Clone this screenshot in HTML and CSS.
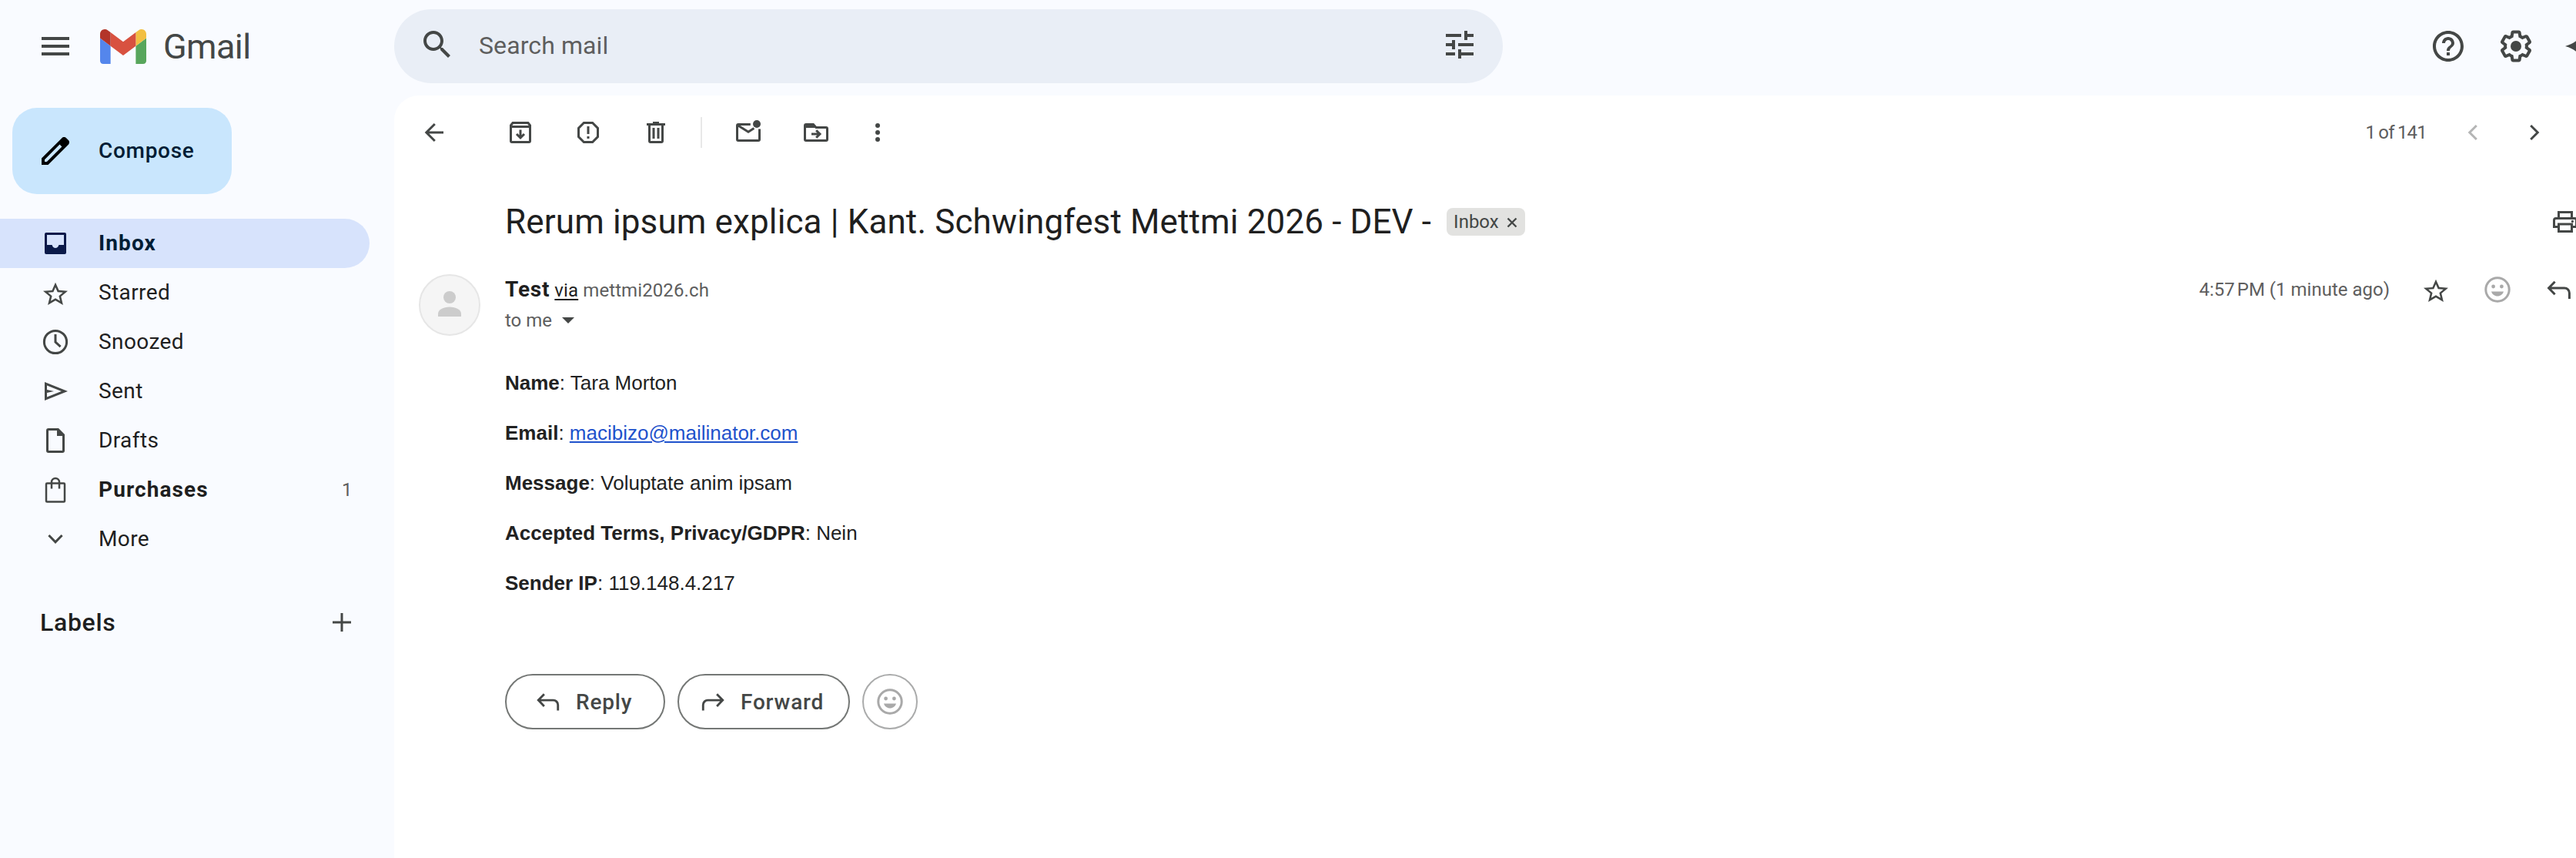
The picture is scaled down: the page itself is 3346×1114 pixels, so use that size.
FILE: index.html
```html
<!DOCTYPE html>
<html lang="en">
<head>
    <meta charset="UTF-8">
    <meta name="viewport" content="width=device-width, initial-scale=1.0">
    <title>Gmail</title>
    <link rel="stylesheet" href="styles.css">
</head>
<body>
    <svg class="sprite" width="0" height="0">
        <symbol id="star" viewBox="0 0 20 20"><path transform="translate(.4 1.8) scale(.8 .77)" d="M22 9.24l-7.19-.62L12 2 9.19 8.63 2 9.24l5.46 4.73L5.82 21 12 17.27 18.18 21l-1.63-7.03L22 9.24zM12 15.4l-3.76 2.27 1-4.28-3.32-2.88 4.38-.38L12 6.1l1.71 4.04 4.38.38-3.32 2.88 1 4.28L12 15.4z"/></symbol>
        <symbol id="smile" viewBox="0 0 20 20"><circle class="line" cx="10" cy="10" r="7.6"/><circle cx="7.3" cy="8" r="1.2"/><circle cx="12.7" cy="8" r="1.2"/><path d="M6 11.3h8c-.5 1.8-2.1 3-4 3s-3.5-1.2-4-3z"/></symbol>
        <symbol id="reply" viewBox="0 0 20 20"><path class="line" d="M7.3 4.9 3.3 9l4 4.1M3.6 9h9.9a3.2 3.2 0 0 1 3.2 3.2V16"/></symbol>
    </svg>

    <header class="header">
        <div class="brand">
            <svg class="icon-lg" viewBox="0 0 24 24"><path d="M3 18h18v-2H3v2zm0-5h18v-2H3v2zm0-7v2h18V6H3z"/></svg>
            <svg class="logo" viewBox="52 42 88 66">
                <path fill="#5486ec" d="M58 108h14V74L52 59v43c0 3.32 2.69 6 6 6"/>
                <path fill="#58a65c" d="M120 108h14c3.32 0 6-2.69 6-6V59l-20 15"/>
                <path fill="#f2bf42" d="M120 48v26l20-15v-8c0-7.42-8.47-11.65-14.4-7.2"/>
                <path fill="#d85140" d="M72 74V48l24 18 24-18v26L96 92"/>
                <path fill="#b33429" d="M52 51v8l20 15V48l-5.6-4.2c-5.94-4.45-14.4-.22-14.4 7.2"/>
            </svg>
            <span class="brand-name">Gmail</span>
        </div>
        <div class="search">
            <svg class="icon-lg" viewBox="0 0 24 24"><path d="M15.5 14h-.79l-.28-.27C15.41 12.59 16 11.11 16 9.5 16 5.91 13.09 3 9.5 3S3 5.91 3 9.5 5.91 16 9.5 16c1.61 0 3.09-.59 4.23-1.57l.27.28v.79l5 4.99L20.49 19l-4.99-5zm-6 0C7.01 14 5 11.99 5 9.5S7.01 5 9.5 5 14 7.01 14 9.5 11.99 14 9.5 14z"/></svg>
            <span class="search-text">Search mail</span>
            <svg class="icon-lg" viewBox="0 0 24 24"><path d="M3 17v2h6v-2H3zM3 5v2h10V5H3zm10 16v-2h8v-2h-8v-2h-2v6h2zM7 9v2H3v2h4v2h2V9H7zm14 4v-2H11v2h10zm-6-4h2V7h4V5h-4V3h-2v6z"/></svg>
        </div>
        <div class="header-tools">
            <svg class="icon-lg" viewBox="0 0 24 24"><path d="M11 18h2v-2h-2v2zm1-16C6.48 2 2 6.48 2 12s4.48 10 10 10 10-4.48 10-10S17.52 2 12 2zm0 18c-4.41 0-8-3.59-8-8s3.59-8 8-8 8 3.59 8 8-3.59 8-8 8zm0-14c-2.21 0-4 1.79-4 4h2c0-1.1.9-2 2-2s2 .9 2 2c0 2-3 1.75-3 5h2c0-2.25 3-2.5 3-5 0-2.21-1.79-4-4-4z"/></svg>
            <svg class="icon-lg" viewBox="0 0 24 24"><path d="M13.85 22.25h-3.7c-.74 0-1.36-.54-1.45-1.27l-.27-1.89c-.27-.14-.53-.29-.79-.46l-1.8.72c-.7.26-1.47-.03-1.81-.65L2.2 15.53c-.35-.66-.2-1.44.36-1.88l1.53-1.19c-.01-.15-.02-.3-.02-.46 0-.15.01-.31.02-.46l-1.52-1.19c-.59-.45-.74-1.26-.37-1.88l1.85-3.19c.34-.62 1.11-.9 1.79-.63l1.81.73c.26-.17.52-.32.78-.46l.27-1.91c.09-.7.71-1.25 1.44-1.25h3.7c.74 0 1.36.54 1.45 1.27l.27 1.89c.27.14.53.29.79.46l1.8-.72c.71-.26 1.48.03 1.82.65l1.84 3.18c.36.66.2 1.44-.36 1.88l-1.52 1.19c.01.15.02.3.02.46s-.01.31-.02.46l1.52 1.19c.56.45.72 1.23.37 1.86l-1.86 3.22c-.34.62-1.11.9-1.8.63l-1.8-.72c-.26.17-.52.32-.78.46l-.27 1.91c-.1.68-.72 1.22-1.46 1.22zm-3.23-2h2.76l.37-2.55.53-.22c.44-.18.88-.44 1.34-.78l.45-.34 2.38.96 1.38-2.4-2.03-1.58.07-.56c.03-.26.06-.51.06-.78s-.03-.53-.06-.78l-.07-.56 2.03-1.58-1.39-2.4-2.39.96-.45-.35c-.42-.32-.87-.58-1.33-.77l-.52-.22-.37-2.55h-2.76l-.37 2.55-.53.21c-.44.19-.88.44-1.34.79l-.45.33-2.38-.95-1.39 2.39 2.03 1.58-.07.56a7 7 0 0 0-.06.79c0 .26.02.53.06.78l.07.56-2.03 1.58 1.38 2.4 2.39-.96.45.35c.43.33.86.58 1.33.77l.53.22.38 2.55z"/><circle cx="12" cy="12" r="3.5"/></svg>
            <svg class="icon-lg" viewBox="0 0 24 24"><path d="M0 12C7 10 10 7 12 0c2 7 5 10 12 12-7 2-10 5-12 12-2-7-5-10-12-12z"/></svg>
        </div>
    </header>

    <div class="content">
        <aside class="sidebar">
            <button class="compose">
                <svg class="icon-lg" viewBox="0 0 24 24"><path d="M5 19h1.425L16.2 9.225 14.775 7.8 5 17.575V19zm-2 2v-4.25L16.2 3.575c.2-.183.42-.325.663-.425.241-.1.495-.15.762-.15s.525.05.775.15c.25.1.467.25.65.45L20.425 5c.2.183.346.4.437.65.092.25.138.5.138.75 0 .267-.046.52-.137.763a1.93 1.93 0 0 1-.438.662L7.25 21H3z"/></svg>
                <span>Compose</span>
            </button>
            <ul class="nav">
                <li class="active">
                    <svg class="icon" viewBox="0 0 20 20"><path fill-rule="evenodd" d="M4 3h12a1 1 0 0 1 1 1v12a1 1 0 0 1-1 1H4a1 1 0 0 1-1-1V4a1 1 0 0 1 1-1zm.5 1.5V11h3.3c.3 1.2 1.2 2 2.2 2s1.9-.8 2.2-2h3.3V4.5z"/></svg>
                    <span>Inbox</span>
                </li>
                <li>
                    <svg class="icon"><use href="#star"/></svg>
                    <span>Starred</span>
                </li>
                <li>
                    <svg class="icon" viewBox="0 0 20 20"><circle class="line" cx="10" cy="10" r="7.3"/><path class="line" d="M10 5v5.1l3.3 3"/></svg>
                    <span>Snoozed</span>
                </li>
                <li>
                    <svg class="icon" viewBox="0 0 20 20"><path d="M3 16V4l15 6-15 6zm1.5-2.25L13.900 10 4.5 6.25V9L9 10l-4.5 1v2.75z"/></svg>
                    <span>Sent</span>
                </li>
                <li>
                    <svg class="icon" viewBox="0 0 20 20"><path class="line" d="M5.5 2.75h6.2l3.55 3.6V16.5a.75.75 0 0 1-.75.75h-9a.75.75 0 0 1-.75-.75v-13a.75.75 0 0 1 .75-.75z"/><path d="M11 2.5h1L15.5 6v1H11z"/></svg>
                    <span>Drafts</span>
                </li>
                <li class="unread">
                    <svg class="icon" viewBox="0 0 20 20"><rect class="line thin" x="4" y="5.8" width="12" height="12" rx=".6"/><path class="line thin" d="M7.5 9.2V5a2.5 2.5 0 0 1 5 0v4.2"/></svg>
                    <span>Purchases</span>
                    <em>1</em>
                </li>
                <li>
                    <svg class="icon" viewBox="0 0 20 20"><path class="line" d="M5.7 7.5 10 11.9l4.3-4.4"/></svg>
                    <span>More</span>
                </li>
            </ul>
            <div class="labels">
                <h2>Labels</h2>
                <svg class="icon" viewBox="0 0 20 20"><path class="line" d="M10 4v12M4 10h12"/></svg>
            </div>
        </aside>

        <main class="mail">
            <div class="toolbar">
                <svg class="icon back" viewBox="0 0 20 20"><path class="line" d="M16 10H5M10.4 4.5 4.9 10l5.5 5.5"/></svg>
                <svg class="icon" viewBox="0 0 20 20"><path class="line" d="M3.75 5.4l1.3-1.65h9.9l1.3 1.65v10.1a.75.75 0 0 1-.75.75h-11a.75.75 0 0 1-.75-.75zM3.75 6.2h12.5M10 8.3v5M7.5 11l2.5 2.5 2.5-2.5"/></svg>
                <svg class="icon" viewBox="0 0 20 20"><path class="line" d="M7.2 3.75h5.6l3.45 3.45v5.6l-3.45 3.45H7.2L3.75 12.8V7.2zM10 6v5M10 12.5V14"/></svg>
                <svg class="icon" viewBox="0 0 20 20"><path class="line" d="M4 4.75h12M8 3.7h4M5.75 5v10.5c0 .4.35.75.75.75h7c.4 0 .75-.35.75-.75V5M8.5 7v7M11.5 7v7"/></svg>
                <i class="divider"></i>
                <svg class="icon" viewBox="0 0 20 20"><path class="line" d="M11.4 4.75H3.5a.75.75 0 0 0-.75.75v9c0 .4.35.75.75.75h13c.4 0 .75-.35.75-.75V7.8M3 5.2l7 4.4 3.7-2.3"/><circle cx="15.5" cy="4.5" r="2.5"/></svg>
                <svg class="icon" viewBox="0 0 20 20"><path class="line" d="M3.5 4.75h4.7l1.8 2h6.5c.4 0 .75.35.75.75v7c0 .4-.35.75-.75.75h-13a.75.75 0 0 1-.75-.75v-9c0-.4.35-.75.75-.75zM7 11h5.5M10.100 8.6l2.4 2.4-2.4 2.4"/><path d="M3 4.5h5.2l2 2.5H3z"/></svg>
                <svg class="icon more" viewBox="0 0 20 20"><circle cx="10" cy="5.5" r="1.5"/><circle cx="10" cy="10" r="1.5"/><circle cx="10" cy="14.5" r="1.5"/></svg>
                <div class="pager">
                    <span>1 of 141</span>
                    <svg class="icon disabled" viewBox="0 0 20 20"><path class="line" d="M12.4 5.5 7.9 10l4.5 4.5"/></svg>
                    <svg class="icon" viewBox="0 0 20 20"><path class="line" d="M7.6 5.5l4.5 4.5-4.5 4.5"/></svg>
                </div>
            </div>

            <div class="subject">
                <h1>Rerum ipsum explica | Kant. Schwingfest Mettmi 2026 - DEV -</h1>
                <div class="chip">
                    <span>Inbox</span>
                    <svg viewBox="0 0 14 14"><path class="line" d="M1.5 1.5l11 11M12.5 1.5l-11 11"/></svg>
                </div>
                <svg class="icon print" viewBox="0 0 20 20"><path class="line" d="M5.75 7.5V3.75h8.5V7.5M5 13.25H2.75V9c0-.7.5-1.25 1.25-1.25h12c.7 0 1.25.5 1.25 1.25v4.25H15M5.75 11.5h8.5v4.75h-8.5z"/><circle cx="14.7" cy="9.7" r=".8"/></svg>
            </div>

            <div class="sender">
                <div class="avatar">
                    <svg viewBox="0 0 30 33"><circle cx="15" cy="8" r="8"/><path d="M0 33v-3.5C0 24 7 20.5 15 20.5s15 3.5 15 9V33z"/></svg>
                </div>
                <div class="sender-info">
                    <div class="from"><strong>Test</strong> <a href="#">via</a> <span>mettmi2026.ch</span></div>
                    <div class="to">to me <i class="caret"></i></div>
                </div>
                <div class="sender-tools">
                    <span>4:57&#8239;PM (1 minute ago)</span>
                    <svg class="icon"><use href="#star"/></svg>
                    <svg class="icon muted"><use href="#smile"/></svg>
                    <svg class="icon"><use href="#reply"/></svg>
                </div>
            </div>

            <div class="message">
                <p><strong>Name</strong>: Tara Morton</p>
                <p><strong>Email</strong>: <a href="mailto:macibizo@mailinator.com">macibizo@mailinator.com</a></p>
                <p><strong>Message</strong>: Voluptate anim ipsam</p>
                <p><strong>Accepted Terms, Privacy/GDPR</strong>: Nein</p>
                <p><strong>Sender IP</strong>: 119.148.4.217</p>
            </div>

            <div class="actions">
                <button class="btn reply-btn"><svg class="icon"><use href="#reply"/></svg>Reply</button>
                <button class="btn forward-btn"><svg class="icon flip"><use href="#reply"/></svg>Forward</button>
                <button class="btn round"><svg class="icon"><use href="#smile"/></svg></button>
            </div>
        </main>
    </div>
</body>
</html>
```
FILE: styles.css
```css
:root{
    --bg: #f9fbff;
    --text: #1f1f1f;
    --icon: #444746;
    --sub: #5e5e5e;
}
*{
    box-sizing: border-box;
}
html, body{
    margin: 0;
    padding: 0;
    height: 100%;
    overflow: hidden;
}
body{
    display: flex;
    flex-direction: column;
    background: var(--bg);
    color: var(--text);
    font-family: Roboto, "Liberation Sans", sans-serif;
    font-size: 28px;
}
svg{
    display: block;
    flex: none;
    fill: var(--icon);
    stroke: none;
    color: var(--icon);
}
.sprite{
    display: none;
}
.line{
    fill: none;
    stroke: currentColor;
    stroke-width: 1.5;
}
.thin{
    stroke-width: 1.25;
}
.icon{
    width: 40px;
    height: 40px;
}
.icon-lg{
    width: 48px;
    height: 48px;
}
button{
    font: inherit;
    cursor: pointer;
}
h1, h2, p, ul{
    margin: 0;
    padding: 0;
    font-weight: 400;
}

/* header */
.header{
    flex: none;
    display: flex;
    height: 124px;
    padding-top: 12px;
}
.brand{
    display: flex;
    align-items: center;
    width: 512px;
    height: 96px;
    padding-left: 48px;
}
.logo{
    width: 60px;
    height: 45px;
    margin: 0 22px 0 34px;
}
.brand-name{
    color: var(--icon);
    font-size: 45px;
    letter-spacing: -.6px;
}
.search{
    display: flex;
    align-items: flex-start;
    width: 1440px;
    height: 96px;
    padding: 22px 32px 0;
    border-radius: 48px;
    background: #e9eef6;
}
.search-text{
    flex: 1;
    margin-left: 30px;
    color: var(--sub);
    font-size: 32px;
    line-height: 51px;
    letter-spacing: .1px;
}
.header-tools{
    display: flex;
    align-items: center;
    gap: 40px;
    height: 96px;
    margin-left: auto;
    margin-right: -34px;
}

/* sidebar */
.content{
    flex: 1;
    display: flex;
}
.sidebar{
    flex: none;
    width: 512px;
    padding-top: 16px;
}
.compose{
    display: flex;
    align-items: center;
    width: 285px;
    height: 112px;
    margin-left: 16px;
    padding: 0 0 0 32px;
    border: 0;
    border-radius: 32px;
    background: #c9e6fd;
    color: #001d35;
    font-weight: 500;
    letter-spacing: .7px;
}
.compose svg{
    margin-right: 32px;
    fill: #000;
}
.compose span,
.nav span{
    padding-bottom: 2px;
}
.nav{
    width: 480px;
    margin-top: 32px;
    list-style: none;
}
.nav li{
    display: flex;
    align-items: center;
    height: 64px;
    padding: 0 22px 0 52px;
    border-radius: 0 32px 32px 0;
    letter-spacing: .4px;
}
.nav span{
    margin-left: 36px;
}
.nav em{
    margin-left: auto;
    color: var(--sub);
    font-size: 24px;
    font-style: normal;
}
.nav .active{
    background: #d7e3fc;
    color: #001d35;
    font-weight: 700;
    letter-spacing: 1.1px;
}
.nav .active svg{
    fill: #0b1a49;
}
.nav .unread span{
    font-weight: 700;
    letter-spacing: 1.1px;
}
.labels{
    display: flex;
    align-items: center;
    justify-content: space-between;
    height: 64px;
    margin-top: 44px;
    padding: 0 48px 0 52px;
}
.labels h2{
    font-size: 32px;
    font-weight: 500;
    letter-spacing: .7px;
}

/* mail */
.mail{
    flex: 1;
    min-width: 0;
    border-radius: 32px 0 0 0;
    background: #fff;
}
.toolbar{
    display: flex;
    align-items: center;
    height: 96px;
    padding-left: 32px;
}
.toolbar > .icon + .icon{
    margin-left: 48px;
}
.toolbar > .back + .icon{
    margin-left: 72px;
}
.toolbar > .icon + .more{
    margin-left: 40px;
}
.divider{
    width: 2px;
    height: 40px;
    margin: 0 40px 0 38px;
    background: #e8e8e8;
}
.pager{
    display: flex;
    align-items: center;
    margin-left: auto;
    padding-right: 34px;
    color: var(--sub);
    font-size: 24px;
    letter-spacing: -.8px;
    word-spacing: -1px;
}
.pager .icon{
    margin-left: 40px;
}
.pager .disabled{
    color: #b4b5b5;
}
.subject{
    display: flex;
    align-items: center;
    height: 72px;
    margin-top: 32px;
    padding-left: 144px;
}
.subject h1{
    font-size: 44px;
    letter-spacing: .13px;
}
.chip{
    display: flex;
    align-items: center;
    height: 36px;
    margin-left: 20px;
    padding: 0 10px 0 9px;
    border-radius: 8px;
    background: #e2e2e0;
    color: var(--icon);
    font-size: 24px;
}
.chip svg{
    width: 14px;
    height: 14px;
    margin: 2px 0 0 10px;
}
.chip .line{
    stroke-width: 2.4;
}
.print{
    margin-left: auto;
    margin-right: -6px;
}

.sender{
    display: flex;
    margin-top: 32px;
    padding-left: 32px;
}
.avatar{
    display: flex;
    align-items: flex-start;
    justify-content: center;
    width: 80px;
    height: 80px;
    padding-top: 20px;
    border: 2px solid #e6e6e6;
    border-radius: 50%;
    background: #f5f5f5;
}
.avatar svg{
    width: 30px;
    height: 33px;
    fill: #ccc;
}
.sender-info{
    margin-left: 32px;
    color: var(--sub);
    font-size: 24px;
}
.from{
    height: 40px;
    line-height: 39px;
    letter-spacing: .1px;
}
.from strong{
    color: var(--text);
    font-size: 28px;
    letter-spacing: .8px;
}
.from a{
    color: var(--text);
    text-underline-offset: 3px;
}
.to{
    display: flex;
    align-items: center;
    height: 40px;
}
.caret{
    margin-left: 13px;
    border: 8px solid transparent;
    border-top-color: var(--icon);
    border-bottom: 0;
}
.sender-tools{
    display: flex;
    align-items: center;
    height: 40px;
    margin-left: auto;
    padding-right: 2px;
    color: var(--sub);
    font-size: 24px;
}
.sender-tools .icon{
    margin-left: 40px;
}
.sender-tools .muted{
    fill: #a9a9a9;
    color: #a9a9a9;
}

.message{
    margin-top: 42px;
    padding-left: 144px;
    color: #222;
    font-family: "Liberation Sans", Arial, sans-serif;
    font-size: 26px;
    line-height: 39px;
}
.message p{
    margin-bottom: 26px;
}
.message a{
    color: #1f52cc;
}

.actions{
    display: flex;
    gap: 16px;
    margin-top: 98px;
    padding-left: 144px;
}
.btn{
    display: flex;
    align-items: center;
    height: 72px;
    padding: 0 0 0 35px;
    border: 2px solid #747775;
    border-radius: 36px;
    background: #fff;
    color: var(--icon);
    font-weight: 500;
    letter-spacing: .8px;
}
.btn .icon{
    width: 38px;
    height: 38px;
    margin-right: 17px;
}
.reply-btn{
    width: 208px;
}
.forward-btn{
    width: 224px;
    padding-left: 25px;
}
.flip{
    transform: scaleX(-1);
}
.round{
    justify-content: center;
    width: 72px;
    padding: 0;
    border-color: #aaabab;
}
.round .icon{
    width: 40px;
    height: 40px;
    margin: 0;
    fill: #a9a9a9;
    color: #a9a9a9;
}
```
